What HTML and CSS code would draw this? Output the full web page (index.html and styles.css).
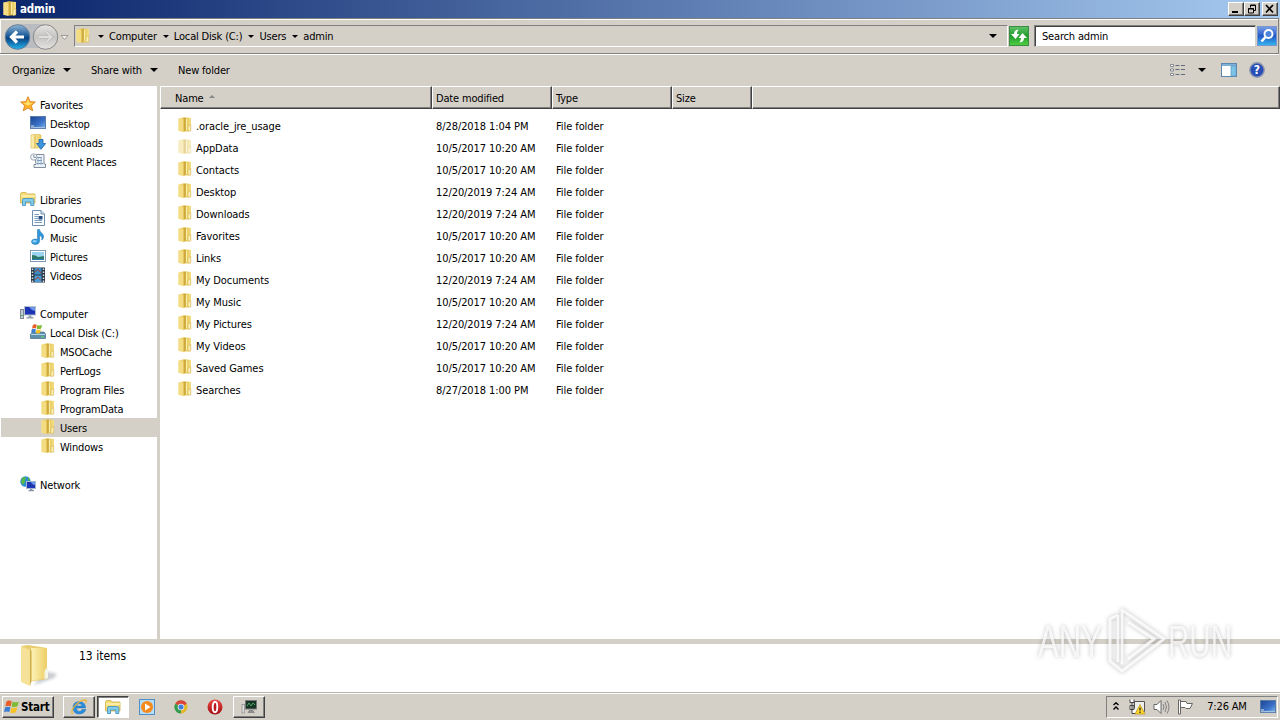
FILE: index.html
```html
<!DOCTYPE html>
<html lang="en">
<head>
  <meta charset="UTF-8">
  <title>admin</title>
  <link rel="stylesheet" href="styles.css">
</head>
<body>

  <!-- icon set -->
  <svg class="defs" width="0" height="0">
    <defs>
      <linearGradient id="gold"><stop offset="0" stop-color="#f7e69a"/><stop offset=".5" stop-color="#e2c04a"/><stop offset="1" stop-color="#f3df83"/></linearGradient>
      <linearGradient id="goldSoft"><stop offset="0" stop-color="#fdf3b8"/><stop offset="1" stop-color="#edce66"/></linearGradient>
      <linearGradient id="blue" x2="1" y2="1"><stop offset="0" stop-color="#1d4390"/><stop offset=".6" stop-color="#3a72c8"/><stop offset="1" stop-color="#7eb9f2"/></linearGradient>
      <linearGradient id="orb" x2="0" y2="1"><stop offset="0" stop-color="#8fb4d4"/><stop offset=".45" stop-color="#1c5c9c"/><stop offset=".55" stop-color="#0a4482"/><stop offset="1" stop-color="#26b4ee"/></linearGradient>
      <linearGradient id="orbOff" x2="0" y2="1"><stop offset="0" stop-color="#e6e5e2"/><stop offset=".5" stop-color="#c5c4c2"/><stop offset="1" stop-color="#e4e3e0"/></linearGradient>
      <linearGradient id="green" x2="0" y2="1"><stop offset="0" stop-color="#62c268"/><stop offset=".5" stop-color="#1d9b2b"/><stop offset="1" stop-color="#52cf42"/></linearGradient>
      <linearGradient id="search" x2="0" y2="1"><stop offset="0" stop-color="#7d9fe5"/><stop offset=".5" stop-color="#2258c8"/><stop offset="1" stop-color="#35b8f0"/></linearGradient>
      <linearGradient id="red" x2="0" y2="1"><stop offset="0" stop-color="#ec4a45"/><stop offset="1" stop-color="#a30b10"/></linearGradient>
    </defs>
    <symbol id="folder" viewBox="0 0 16 16">
      <path d="M1.500 1.500 L7 .3 L14 1 V14 L8 14.500 L1.500 14Z" fill="url(#gold)"/>
      <path d="M1.500 1.500 L6.500 2.500 V15 L1.500 13.700Z" fill="#f3dc82"/>
      <path d="M6.700 .8 L9 1 V12.500 L6.700 15.300Z" fill="#cfa93c"/>
      <path d="M9.500 1.500 V13" stroke="#f9edaa" stroke-width="1.200"/>
      <path d="M11 9 L13.800 7.500 V14 L11 14.500Z" fill="#f9eeb4" stroke="#cfac45" stroke-width=".5"/>
    </symbol>
    <symbol id="star" viewBox="0 0 16 16">
      <path d="M8 .7 L10.1 5.6 L15.4 6 L11.4 9.5 L12.7 14.8 L8 12 L3.3 14.8 L4.6 9.5 L.6 6 L5.9 5.6Z" fill="#fbb02c" stroke="#d98326" stroke-width=".9"/>
      <path d="M8 3 L9.2 6.8 L12.8 7 L8 9.5 L3.2 7 L6.8 6.8Z" fill="#ffe36c"/>
    </symbol>
    <symbol id="screen" viewBox="0 0 16 16">
      <rect x=".5" y="1.500" width="15" height="12" fill="url(#blue)" stroke="#5a7ca8"/>
      <path d="M1 12.500 H15" stroke="#a5c4e4" stroke-width="1.200"/>
      <path d="M1 10 H4 V12.500 H1Z" fill="#8aa8cb"/>
    </symbol>
    <symbol id="download" viewBox="0 0 16 16">
      <path d="M1 1 L6 0 L11 1 V14 L6 14 L1 14Z" fill="url(#goldSoft)" stroke="#ddbd5a" stroke-width=".7"/>
      <path d="M5 1 V14" stroke="#d5b34a"/>
      <path d="M9 5.5 H13 V9.5 H15.7 L11 15.3 L6.5 9.5 H9Z" fill="#3d95dd" stroke="#1c62a4" stroke-width=".8"/>
    </symbol>
    <symbol id="recent" viewBox="0 0 16 16">
      <path d="M5 1.500 H14 V11 H15.500 V14.500 H4 V11.500 H6Z" fill="#eef2f6" stroke="#7f8f9f"/>
      <path d="M7 4.500 H12 M7 7.500 H12 M7 10.500 H13" stroke="#6a92ba"/>
      <path d="M8 4 V12 M11 4 V12" stroke="#9cb4cc"/>
      <circle cx="3.800" cy="4" r="3.200" fill="#f5f7f9" stroke="#9da8b3"/>
      <path d="M3.800 2 V4.300 H6" stroke="#65788b" fill="none" stroke-width=".8"/>
    </symbol>
    <symbol id="library" viewBox="0 0 16 16">
      <path d="M.5 3 L1.5 1.5 H6 L7 3 H15 V12 H.5Z" fill="#f5dc75" stroke="#cfae48" stroke-width=".8"/>
      <path d="M1 5 H15" stroke="#fff3b5" stroke-width="1.5"/>
      <path d="M2.5 14.5 V9 Q2.5 7.5 4 7.5 H12 Q13.8 7.5 13.8 9 V14.5 H10.8 V11 H5.5 V14.5Z" fill="#83cbed" stroke="#4795bd" stroke-width=".9"/>
    </symbol>
    <symbol id="document" viewBox="0 0 16 16">
      <path d="M2.5 .5 H11 L14.5 4 V15.5 H2.5Z" fill="#fcfdff" stroke="#708fae"/>
      <path d="M11 .5 V4 H14.5" fill="#d5e4f1" stroke="#708fae"/>
      <path d="M4.500 4.500 H9 M4.500 6.500 H8 M4.500 8.500 H8 M4.500 10.500 H12 M4.500 12.500 H12" stroke="#7a9cc0"/>
      <rect x="8.500" y="6" width="4" height="3.500" fill="#284f83"/>
    </symbol>
    <symbol id="music" viewBox="0 0 16 16">
      <path d="M7.500 .5 H9.500 C10 4 14 4.500 13.500 8 C13.300 10 12 11 11.600 11 C12.500 8.500 11.500 7 9.500 6.500 V12 C9.500 14.500 7.500 15.500 5.300 15.500 C3 15.500 1.500 14.300 1.500 12.700 C1.500 10.500 4.500 9.500 7.500 10.500Z" fill="#2f99dc" stroke="#1668a8" stroke-width=".5"/>
      <ellipse cx="4.700" cy="12.300" rx="2" ry="1.200" fill="#86cdf4"/>
    </symbol>
    <symbol id="picture" viewBox="0 0 16 16">
      <rect x=".5" y="2.500" width="15" height="11" fill="#fff" stroke="#7f9bb5"/>
      <rect x="2" y="4" width="12" height="8" fill="#9bd4f1"/>
      <path d="M2 7 Q6 7 8 9 L14 8 V12 H2Z" fill="#2e7964"/>
      <path d="M2 10.800 H14 V12 H2Z" fill="#2d78ad"/>
    </symbol>
    <symbol id="video" viewBox="0 0 16 16">
      <rect x="1" y=".5" width="14" height="15" fill="#273747"/>
      <rect x="4.500" y="1" width="7" height="6.500" fill="#3f8dc5"/>
      <rect x="4.500" y="8.500" width="7" height="6.500" fill="#4b9dd5"/>
      <path d="M5 5 L8 2.500 L11 6 M5 13 L8 10 L11 13.500" stroke="#a33f3a" fill="none"/>
      <path d="M2.500 1.500 V15 M13.500 1.500 V15" stroke="#d7e0e7" stroke-width="1.500" stroke-dasharray="1.500 1.500"/>
    </symbol>
    <symbol id="computer" viewBox="0 0 16 16">
      <rect x=".5" y="4.500" width="3" height="9" fill="#c3ccd5" stroke="#7f8b98"/>
      <path d="M1 10.500 H3" stroke="#4eb43f"/>
      <rect x="4.500" y="1.500" width="11" height="8.500" fill="#1d35b4" stroke="#b5c0cf"/>
      <path d="M9 2 H15 V6 Q11 5 9 2Z" fill="#6b93ea"/>
      <path d="M8.500 10.500 H11.500 V12 H13.500 V13.500 H6.500 V12 H8.500Z" fill="#95a2b0"/>
    </symbol>
    <symbol id="flag" viewBox="0 0 16 16">
      <path d="M2.500 2.500 Q5 .8 7.700 2.300 L6.700 7.200 Q4 6 1.300 7.500Z" fill="#e85d28"/>
      <path d="M8.500 2.600 Q11.500 4 14.800 2.400 L13.500 7.300 Q10.500 8.700 7.600 7.500Z" fill="#7fbb35"/>
      <path d="M1.100 8.400 Q4 7 6.500 8.200 L5.300 13 Q2.500 11.800 0 13.300Z" fill="#3b7fd5"/>
      <path d="M7.400 8.500 Q10.500 9.800 13.300 8.300 L12 13.200 Q9 14.600 6.200 13.400Z" fill="#f6c227"/>
    </symbol>
    <symbol id="disk" viewBox="0 0 16 16">
      <path d="M1 10 L3 8 H14 L15.500 10 V14.500 H.5 V10Z" fill="#5e8fae" stroke="#466f8a" stroke-width=".7"/>
      <path d="M1 10.500 H15" stroke="#b9d5e4"/>
      <path d="M11 13 H14" stroke="#66e257"/>
      <svg x="1" y="-1" width="12" height="12" viewBox="0 0 16 16"><use href="#flag"/></svg>
    </symbol>
    <symbol id="network" viewBox="0 0 16 16">
      <circle cx="5.500" cy="5.500" r="5.200" fill="#2b8ed3"/>
      <path d="M2 2 Q5 0 6 2 Q4 4 5 6 L3 9 L1 6Z M8 1 L10 4 L8 5Z" fill="#57b947"/>
      <rect x="6.500" y="5.500" width="9" height="7" fill="#1d37b5" stroke="#a7b7cf"/>
      <path d="M11 6 H15 V9 Q12 9 11 6Z" fill="#6894ea"/>
      <path d="M10 13 H12.500 V14 H14 V15.300 H8.500 V14 H10Z" fill="#8795a5"/>
    </symbol>
    <symbol id="ie" viewBox="0 0 18 16">
      <path d="M13.500 10.500 H16 Q14 15 9 15 Q3 15 3 8.500 Q3 2.500 9.500 2.500 Q15.500 3 15.500 9 H6.500 Q6.500 12.500 9.500 12.500 Q11.500 12.500 12 10.500Z M6.500 7 H12 Q12 4.800 9.400 4.800 Q7 4.800 6.500 7Z" fill="#278ddd" fill-rule="evenodd" stroke="#1764aa" stroke-width=".4"/>
      <path d="M3 15 Q0 14 4 8 Q9 1.500 14.500 .8 Q17.500 .8 15.500 4.200" fill="none" stroke="#e9b434" stroke-width="1.200"/>
    </symbol>
  </svg>

  <div class="window">
    <div class="titlebar">
      <svg class="icon"><use href="#folder"/></svg>
      <span class="title">admin</span>
      <div class="win-buttons">
        <button class="win-btn"><svg width="12" height="10"><path d="M2 8 H8" stroke="#000" stroke-width="2"/></svg></button>
        <button class="win-btn"><svg width="12" height="10"><path d="M4.500 3.500 V1 H9.500 V6.500 H8 M4 1.500 H10 M2.500 4.500 H7.500 V9 H2.500Z M2 5 H8" fill="none" stroke="#000"/></svg></button>
        <button class="win-btn close"><svg width="12" height="10"><path d="M2 1 L9 8.500 M9 1 L2 8.500" stroke="#000" stroke-width="1.700"/></svg></button>
      </div>
    </div>

    <div class="navbar">
      <svg class="orbs" width="72" height="30" viewBox="0 0 72 30">
        <path d="M17 3 H45 V27 H17Z" fill="#b9bcc0"/>
        <circle cx="17.500" cy="16" r="12.300" fill="url(#orb)" stroke="#657e98"/>
        <path d="M24 16 H12 M17 10.500 L11.500 16 L17 21.500" fill="none" stroke="#fff" stroke-width="3.200"/>
        <circle cx="45.500" cy="16" r="12.300" fill="url(#orbOff)" stroke="#898989"/>
        <path d="M39 16 H51 M46 10.500 L51.500 16 L46 21.500" fill="none" stroke="#b5b5b5" stroke-width="3"/>
        <path d="M39 16 H51 M46 10.500 L51.500 16 L46 21.500" fill="none" stroke="#dedede" stroke-width="1.800"/>
        <path d="M61 14.500 H68 L64.500 18.500Z" fill="#f4f2ee" stroke="#8a8884" stroke-width=".8"/>
      </svg>
      <div class="address">
        <svg class="icon"><use href="#folder"/></svg>
        <i class="arrow small first"></i><span>Computer</span>
        <i class="arrow small"></i><span>Local Disk (C:)</span>
        <i class="arrow small"></i><span>Users</span>
        <i class="arrow small"></i><span>admin</span>
        <i class="arrow drop"></i>
      </div>
      <svg class="refresh" width="20" height="20" viewBox="0 0 20 20">
        <rect x=".5" y=".5" width="19" height="19" fill="url(#green)" stroke="#3b8d43"/>
        <path d="M9.500 3.500 Q5 4 5 8 H2 L6.500 13 L10.500 8 H8 Q8 5.500 9.500 3.500Z M10.500 16.500 Q15 16 15 12 H18 L13.500 7 L9.500 12 H12 Q12 14.500 10.500 16.500Z" fill="#fff"/>
      </svg>
      <div class="search">Search admin</div>
      <svg class="search-btn" width="20" height="20" viewBox="0 0 20 20">
        <rect x=".5" y=".5" width="19" height="19" fill="url(#search)" stroke="#7795cf"/>
        <circle cx="11.500" cy="8" r="4" fill="#4c83dd" stroke="#fff" stroke-width="1.900"/>
        <path d="M8.500 11 L4.500 15.500" stroke="#fff" stroke-width="2.600"/>
      </svg>
    </div>

    <div class="toolbar">
      <span class="tool organize">Organize</span><i class="arrow"></i>
      <span class="tool share">Share with</span><i class="arrow"></i>
      <span class="tool new-folder">New folder</span>
      <div class="view-tools">
        <svg width="16" height="14" viewBox="0 0 16 14">
          <path d="M.5 1.500 H3.500 V3.500 H.5Z M.5 6 H3.500 V8 H.5Z M.5 10.500 H3.500 V12.500 H.5Z" fill="#fff" stroke="#7b8088" stroke-width=".9"/>
          <path d="M5.500 2.500 H9.500 M11 2.500 H15 M5.500 6.500 H9.500 M11 6.500 H15 M5.500 11.500 H9.500 M11 11.500 H15" stroke="#626b78"/>
        </svg>
        <i class="arrow"></i>
        <svg class="pane-icon" width="16" height="14" viewBox="0 0 16 14">
          <rect x=".5" y=".5" width="15" height="13" fill="#fff" stroke="#5e87ad"/>
          <path d="M1 2 H15" stroke="#7eb1d8" stroke-width="2"/>
          <rect x="10" y="3" width="5" height="10" fill="#7cc3e8" stroke="#5e96bd" stroke-width=".7"/>
        </svg>
        <svg class="help-icon" width="16" height="16" viewBox="0 0 16 16">
          <circle cx="8" cy="8" r="7.200" fill="#294eb5" stroke="#8d97b0" stroke-width="1.400"/>
          <text x="8" y="12.200" class="help-mark">?</text>
        </svg>
      </div>
    </div>

    <div class="main">
      <div class="sidebar">
        <div class="node"><svg class="icon"><use href="#star"/></svg>Favorites</div>
        <div class="node l1"><svg class="icon"><use href="#screen"/></svg>Desktop</div>
        <div class="node l1"><svg class="icon"><use href="#download"/></svg>Downloads</div>
        <div class="node l1"><svg class="icon"><use href="#recent"/></svg>Recent Places</div>

        <div class="node group"><svg class="icon"><use href="#library"/></svg>Libraries</div>
        <div class="node l1"><svg class="icon"><use href="#document"/></svg>Documents</div>
        <div class="node l1"><svg class="icon"><use href="#music"/></svg>Music</div>
        <div class="node l1"><svg class="icon"><use href="#picture"/></svg>Pictures</div>
        <div class="node l1"><svg class="icon"><use href="#video"/></svg>Videos</div>

        <div class="node group"><svg class="icon"><use href="#computer"/></svg>Computer</div>
        <div class="node l1"><svg class="icon"><use href="#disk"/></svg>Local Disk (C:)</div>
        <div class="node l2"><svg class="icon"><use href="#folder"/></svg>MSOCache</div>
        <div class="node l2"><svg class="icon"><use href="#folder"/></svg>PerfLogs</div>
        <div class="node l2"><svg class="icon"><use href="#folder"/></svg>Program Files</div>
        <div class="node l2"><svg class="icon"><use href="#folder"/></svg>ProgramData</div>
        <div class="node l2 selected"><svg class="icon"><use href="#folder"/></svg>Users</div>
        <div class="node l2"><svg class="icon"><use href="#folder"/></svg>Windows</div>

        <div class="node group"><svg class="icon"><use href="#network"/></svg>Network</div>
      </div>

      <div class="files">
        <div class="columns head">
          <div class="col name">Name<i class="sort"></i></div>
          <div class="col">Date modified</div>
          <div class="col">Type</div>
          <div class="col">Size</div>
          <div class="col"></div>
        </div>
        <div class="rows">
          <div class="columns row"><div class="file"><svg class="icon"><use href="#folder"/></svg>.oracle_jre_usage</div><div>8/28/2018 1:04 PM</div><div>File folder</div></div>
          <div class="columns row"><div class="file hidden"><svg class="icon"><use href="#folder"/></svg>AppData</div><div>10/5/2017 10:20 AM</div><div>File folder</div></div>
          <div class="columns row"><div class="file"><svg class="icon"><use href="#folder"/></svg>Contacts</div><div>10/5/2017 10:20 AM</div><div>File folder</div></div>
          <div class="columns row"><div class="file"><svg class="icon"><use href="#folder"/></svg>Desktop</div><div>12/20/2019 7:24 AM</div><div>File folder</div></div>
          <div class="columns row"><div class="file"><svg class="icon"><use href="#folder"/></svg>Downloads</div><div>12/20/2019 7:24 AM</div><div>File folder</div></div>
          <div class="columns row"><div class="file"><svg class="icon"><use href="#folder"/></svg>Favorites</div><div>10/5/2017 10:20 AM</div><div>File folder</div></div>
          <div class="columns row"><div class="file"><svg class="icon"><use href="#folder"/></svg>Links</div><div>10/5/2017 10:20 AM</div><div>File folder</div></div>
          <div class="columns row"><div class="file"><svg class="icon"><use href="#folder"/></svg>My Documents</div><div>12/20/2019 7:24 AM</div><div>File folder</div></div>
          <div class="columns row"><div class="file"><svg class="icon"><use href="#folder"/></svg>My Music</div><div>10/5/2017 10:20 AM</div><div>File folder</div></div>
          <div class="columns row"><div class="file"><svg class="icon"><use href="#folder"/></svg>My Pictures</div><div>12/20/2019 7:24 AM</div><div>File folder</div></div>
          <div class="columns row"><div class="file"><svg class="icon"><use href="#folder"/></svg>My Videos</div><div>10/5/2017 10:20 AM</div><div>File folder</div></div>
          <div class="columns row"><div class="file"><svg class="icon"><use href="#folder"/></svg>Saved Games</div><div>10/5/2017 10:20 AM</div><div>File folder</div></div>
          <div class="columns row"><div class="file"><svg class="icon"><use href="#folder"/></svg>Searches</div><div>8/27/2018 1:00 PM</div><div>File folder</div></div>
        </div>
      </div>
    </div>

    <div class="details">
      <svg width="40" height="44" viewBox="0 0 40 44">
        <path class="folder-shadow" d="M24 26 L37 29 L34 33 L14 40Z"/>
        <path d="M1 1 L8 0 L27 3 V34 L8 37 L1 35Z" fill="#e9cd70"/>
        <path d="M11 3 L27 3 V33 L11 36Z" fill="url(#goldSoft)"/>
        <path d="M1 1 L10 5 V41 L1 37Z" fill="#f5e197"/>
        <path d="M10 4 L11.500 6 V36 L10 41Z" fill="#cfab43"/>
        <path d="M24.500 27 Q25 23 28 23 V33 L24.500 34Z" fill="#f4f6ea"/>
      </svg>
      <span class="count">13 items</span>
    </div>
  </div>

  <div class="taskbar">
    <button class="start"><svg class="start-flag"><use href="#flag"/></svg>Start</button>
    <button class="task raised"><svg width="18" height="16"><use href="#ie"/></svg></button>
    <button class="task pressed"><svg class="icon"><use href="#library"/></svg></button>
    <button class="task">
      <svg class="icon" viewBox="0 0 16 16"><rect x=".5" y=".5" width="15" height="15" fill="#b9dcf5" stroke="#4c8fc9"/><circle cx="8" cy="8" r="6" fill="#f58a1c"/><path d="M6 4.500 L11.500 8 L6 11.500Z" fill="#fff"/></svg>
    </button>
    <button class="task">
      <svg class="icon" viewBox="0 0 16 16"><circle cx="8" cy="8" r="6.500" fill="#e3b72a"/><path d="M8 8 L2.300 4.700 A6.500 6.500 0 0 1 13.700 4.700Z" fill="#d8443a"/><path d="M8 8 L8 14.500 A6.500 6.500 0 0 1 2.300 4.700Z" fill="#369d50"/><circle cx="8" cy="8" r="3.300" fill="#eee"/><circle cx="8" cy="8" r="2.500" fill="#3d7fdc"/></svg>
    </button>
    <button class="task">
      <svg class="icon" viewBox="0 0 16 16"><circle cx="8" cy="8" r="7.500" fill="url(#red)"/><ellipse cx="8" cy="8" rx="2.300" ry="5.200" fill="#b81c1f" stroke="#fff" stroke-width="1.900"/></svg>
    </button>
    <button class="task raised last">
      <svg class="icon" viewBox="0 0 16 16"><rect x="1" y="5.500" width="2.500" height="8.500" fill="#ddd" stroke="#888" stroke-width=".7"/><rect x="4.500" y="1.500" width="11" height="8.500" fill="#163323" stroke="#777"/><path d="M6 7 L8 4 L10 7 L12 4 L14 6" fill="none" stroke="#4fa565"/><path d="M8 11 H12 L14 14 H6.500Z" fill="#8c8c8c"/></svg>
    </button>

    <div class="tray">
      <svg class="chevrons" width="8" height="10"><path d="M1.500 3 L4 .8 L6.500 3 M1.500 7.500 L4 5 L6.500 7.500" fill="none" stroke="#000" stroke-width="1.400"/></svg>
      <svg class="net" width="17" height="16" viewBox="0 0 17 16">
        <path d="M5.500 2.500 H15.500 V12.500 H5.500Z" fill="#eee" stroke="#555"/>
        <path d="M1 .5 V3.500 H5 V.5 M3 4 V14.500 H8 M1 6.500 H5 V10.500 H1Z" fill="#fff" stroke="#444"/>
        <path d="M11 5.500 L16 15 H6Z" fill="#ffd92e" stroke="#b8941c" stroke-width=".7"/>
        <path d="M11 8.500 V11.500 M11 12.600 V14" stroke="#222" stroke-width="1.300"/>
      </svg>
      <svg class="sound" width="17" height="16" viewBox="0 0 17 16">
        <path d="M1 5.500 H4 L8 1.500 V14.500 L4 10.500 H1Z" fill="#fff" stroke="#666"/>
        <path d="M10 5 Q12 8 10 11 M12 3 Q15 8 12 13 M14 1.500 Q18 8 14 14.500" fill="none" stroke="#777" stroke-width=".9"/>
      </svg>
      <svg class="action" width="17" height="16" viewBox="0 0 17 16">
        <path d="M1.500 1 H3.500 V15 H1.500Z M3.500 2.500 H9 L10 4.500 H15.500 L13 9.500 H9 L8 8.500 H3.500Z" fill="#fff" stroke="#666"/>
      </svg>
      <span class="clock">7:26 AM</span>
      <svg class="icon"><use href="#screen"/></svg>
    </div>
  </div>

  <div class="watermark">
    <svg width="245" height="80" viewBox="0 0 245 80">
      <g class="mark">
        <text x="8" y="55" textLength="64" lengthAdjust="spacingAndGlyphs">ANY</text>
        <path d="M88 13 L80 17 V59 L92 69 L134 37 L92 8 V62 M88 13 V60 M98 20 L124 37 L98 57"/>
        <text x="138" y="55" textLength="64" lengthAdjust="spacingAndGlyphs">RUN</text>
      </g>
    </svg>
  </div>

</body>
</html>
```
FILE: styles.css
```css
* {
  box-sizing: border-box;
}

body {
  margin: 0;
  width: 1280px;
  height: 720px;
  overflow: hidden;
  background: #d4d0c8;
  color: #000;
  font-family: "DejaVu Sans Condensed", "DejaVu Sans", sans-serif;
  font-stretch: condensed;
  font-size: 11px;
  letter-spacing: -0.17px;
  display: flex;
  flex-direction: column;
  white-space: nowrap;
}

svg {
  display: block;
  flex: none;
}

button {
  font: inherit;
  letter-spacing: inherit;
  color: inherit;
  padding: 0;
  background: #d4d0c8;
  border: 0;
}

.defs {
  position: absolute;
}

.icon {
  width: 16px;
  height: 16px;
}

.window {
  height: 693px;
  display: flex;
  flex-direction: column;
}

/* title bar */
.titlebar {
  height: 18px;
  padding: 0 2px;
  display: flex;
  align-items: center;
  background: linear-gradient(90deg, #0a246a, #a6caf0);
}

.title {
  color: #fff;
  font-weight: bold;
  font-size: 11.5px;
  margin-left: 2px;
}

.win-buttons {
  display: flex;
  margin-left: auto;
}

.win-btn,
.start,
.task.raised {
  border: 1px solid;
  border-color: #fff #404040 #404040 #fff;
  box-shadow: inset -1px -1px #808080;
}

.win-btn {
  width: 16px;
  height: 14px;
  display: flex;
  align-items: center;
  justify-content: center;
}

.win-btn.close {
  margin-left: 2px;
}

/* address bar */
.navbar {
  height: 36px;
  margin-right: 1px;
  display: flex;
  align-items: center;
  border-top: 1px solid #808080;
  border-bottom: 1px solid #808080;
  border-right: 1px solid #808080;
  box-shadow: inset 1px 1px #fff, 0 1px #fff;
}

.address {
  width: 934px;
  height: 22px;
  margin-left: 2px;
  display: flex;
  align-items: center;
  border: 1px solid;
  border-color: #808080 #fff #fff #808080;
}

.arrow {
  border: 4px solid transparent;
  border-top-color: #000;
  border-bottom: 0;
}

.arrow.small {
  border-width: 3px 3px 0;
  margin: 0 5px 0 6px;
}

.arrow.small.first {
  margin-left: 7px;
}

.arrow.drop {
  margin: 0 10px 0 auto;
}

.refresh {
  margin-left: 1px;
}

.search {
  width: 222px;
  height: 22px;
  margin-left: 5px;
  padding: 4px 0 0 7px;
  background: #fff;
  border: 1px solid;
  border-color: #808080 #d4d0c8 #d4d0c8 #808080;
  box-shadow: inset 1px 1px #404040;
}

.search-btn {
  margin-left: 1px;
}

/* command bar */
.toolbar {
  height: 32px;
  padding-left: 12px;
  display: flex;
  align-items: center;
}

.organize {
  width: 51px;
}

.share {
  width: 59px;
  margin-left: 20px;
}

.new-folder {
  margin-left: 20px;
}

.view-tools {
  display: flex;
  align-items: center;
  margin: 0 15px 0 auto;
}

.view-tools .arrow {
  margin-left: 12px;
}

.pane-icon {
  margin-left: 15px;
}

.help-icon {
  margin-left: 12px;
}

.help-mark {
  fill: #fff;
  font-size: 12px;
  font-weight: bold;
  letter-spacing: 0;
  text-anchor: middle;
}

/* folder tree and file list */
.main {
  height: 553px;
  display: flex;
}

.sidebar {
  width: 157px;
  padding-top: 9px;
  background: #fff;
}

.node {
  height: 19px;
  margin-left: 1px;
  padding: 1px 0 0 19px;
  display: flex;
  align-items: center;
  gap: 4px;
}

.node .icon {
  margin-top: -2px;
}

.node.group {
  margin-top: 19px;
}

.l1 {
  padding-left: 29px;
}

.l2 {
  padding-left: 39px;
}

.selected {
  background: #d4d0c8;
}

.files {
  flex: 1;
  margin-left: 3px;
  background: #fff;
}

.columns {
  display: grid;
  grid-template-columns: 272px 120px 120px 80px 1fr;
}

.col {
  height: 23px;
  padding: 1px 3px 0;
  display: flex;
  align-items: center;
  background: #d4d0c8;
  border: 1px solid;
  border-color: #fff #404040 #404040 #fff;
  box-shadow: inset -1px -1px #808080;
}

.col.name {
  padding-left: 14px;
}

.sort {
  margin: 0 0 3px 5px;
  border: 3px solid transparent;
  border-top: 0;
  border-bottom-color: #888;
}

.rows {
  padding-top: 6px;
}

.row {
  height: 22px;
  align-items: center;
  letter-spacing: -0.08px;
}

.row > div {
  padding-left: 4px;
}

.row .file {
  display: flex;
  align-items: center;
  gap: 3px;
  padding-left: 17px;
}

.file .icon {
  margin-top: -2px;
}

.file.hidden .icon {
  opacity: 0.5;
}

/* details pane */
.details {
  height: 54px;
  padding: 1px 0 0 20px;
  display: flex;
  background: #fff;
  border-top: 5px solid #d4d0c8;
  border-bottom: 1px solid #b8b4ac;
}

.folder-shadow {
  fill: #c9ccd0;
  filter: blur(1.5px);
}

.count {
  font-size: 12px;
  letter-spacing: 0;
  margin: 4px 0 0 19px;
}

/* taskbar */
.taskbar {
  height: 27px;
  padding: 1px 2px 2px;
  display: flex;
  align-items: center;
  border-top: 1px solid #fff;
}

.start {
  width: 52px;
  height: 22px;
  display: flex;
  align-items: center;
  gap: 1px;
  padding-left: 1px;
  margin-right: 9px;
  font-weight: bold;
  font-size: 11.5px;
}

.start-flag {
  width: 16px;
  height: 16px;
}

.task {
  width: 32px;
  height: 22px;
  margin-right: 2px;
  display: flex;
  align-items: center;
  justify-content: center;
}

.task.pressed {
  background: #fff;
  border: 1px solid;
  border-color: #404040 #fff #fff #404040;
  box-shadow: inset 1px 1px #808080;
}

.tray {
  width: 172px;
  height: 22px;
  margin-left: auto;
  padding: 0 1px 0 5px;
  display: flex;
  align-items: center;
  border: 1px solid;
  border-color: #808080 #fff #fff #808080;
}

.net {
  margin-left: 9px;
}

.sound,
.action {
  margin-left: 7px;
}

.clock {
  margin: 0 auto;
}

/* overlay */
.watermark {
  position: absolute;
  left: 1030px;
  top: 602px;
}

.mark {
  font-family: "Liberation Sans", sans-serif;
  font-size: 45px;
  letter-spacing: 0;
  fill: #fff;
  fill-opacity: 0.75;
  filter: drop-shadow(0 0 2px rgba(0, 0, 0, 0.32));
}

.mark path {
  fill: none;
  stroke: #fff;
  stroke-opacity: 0.8;
  stroke-width: 3;
  stroke-linejoin: round;
}
```
